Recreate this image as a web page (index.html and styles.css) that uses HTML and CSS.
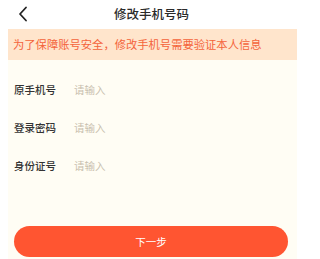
FILE: index.html
```html
<!DOCTYPE html>
<html lang="zh">
<head>
<meta charset="utf-8">
<link rel="stylesheet" href="styles.css">
</head>
<body>
<div class="header">
  <svg class="back" width="10" height="16" viewBox="0 0 10 16"><path d="M8 1.5 L2 8 L8 14.5" fill="none" stroke="#222" stroke-width="1.8" stroke-linecap="round" stroke-linejoin="round"/></svg>
  <div class="title">修改手机号码</div>
</div>
<div class="panel">
  <div class="notice">为了保障账号安全，修改手机号需要验证本人信息</div>
  <div class="form">
    <div class="row"><span class="label">原手机号</span><span class="ph">请输入</span></div>
    <div class="row"><span class="label">登录密码</span><span class="ph">请输入</span></div>
    <div class="row"><span class="label">身份证号</span><span class="ph">请输入</span></div>
  </div>
  <div class="btn">下一步</div>
</div>
</body>
</html>
```
FILE: styles.css
```css
html, body {
  margin: 0;
  padding: 0;
  background: #ffffff;
  font-family: "Noto Sans CJK SC", sans-serif;
}
body {
  width: 300px;
  height: 259px;
  overflow: hidden;
}
.header {
  position: relative;
  height: 29px;
  display: flex;
  align-items: center;
  justify-content: center;
}
.back {
  position: absolute;
  left: 18px;
  top: 6px;
}
.title {
  font-size: 12.5px;
  font-weight: 500;
  color: #2a2a2a;
  line-height: 1;
  margin-left: 3px;
  margin-top: -1px;
}
.panel {
  margin-left: 8px;
  width: 289px;
  height: 230px;
  background: #fffdf4;
  display: flex;
  flex-direction: column;
}
.notice {
  height: 31px;
  background: #ffe5cc;
  color: #f4633a;
  font-size: 11.3px;
  line-height: 31px;
  padding-left: 5px;
  white-space: nowrap;
}
.form {
  margin-top: 10px;
  display: flex;
  flex-direction: column;
}
.row {
  height: 38px;
  display: flex;
  align-items: center;
  padding-left: 6px;
}
.label {
  width: 60px;
  font-size: 10.5px;
  font-weight: 500;
  color: #333333;
}
.ph {
  font-size: 10.5px;
  color: #c9bfae;
}
.btn {
  margin: 42px 9px 0 6px;
  height: 31px;
  border-radius: 16px;
  background: #ff5531;
  color: #ffffff;
  font-size: 10.5px;
  display: flex;
  align-items: center;
  justify-content: center;
}
```
